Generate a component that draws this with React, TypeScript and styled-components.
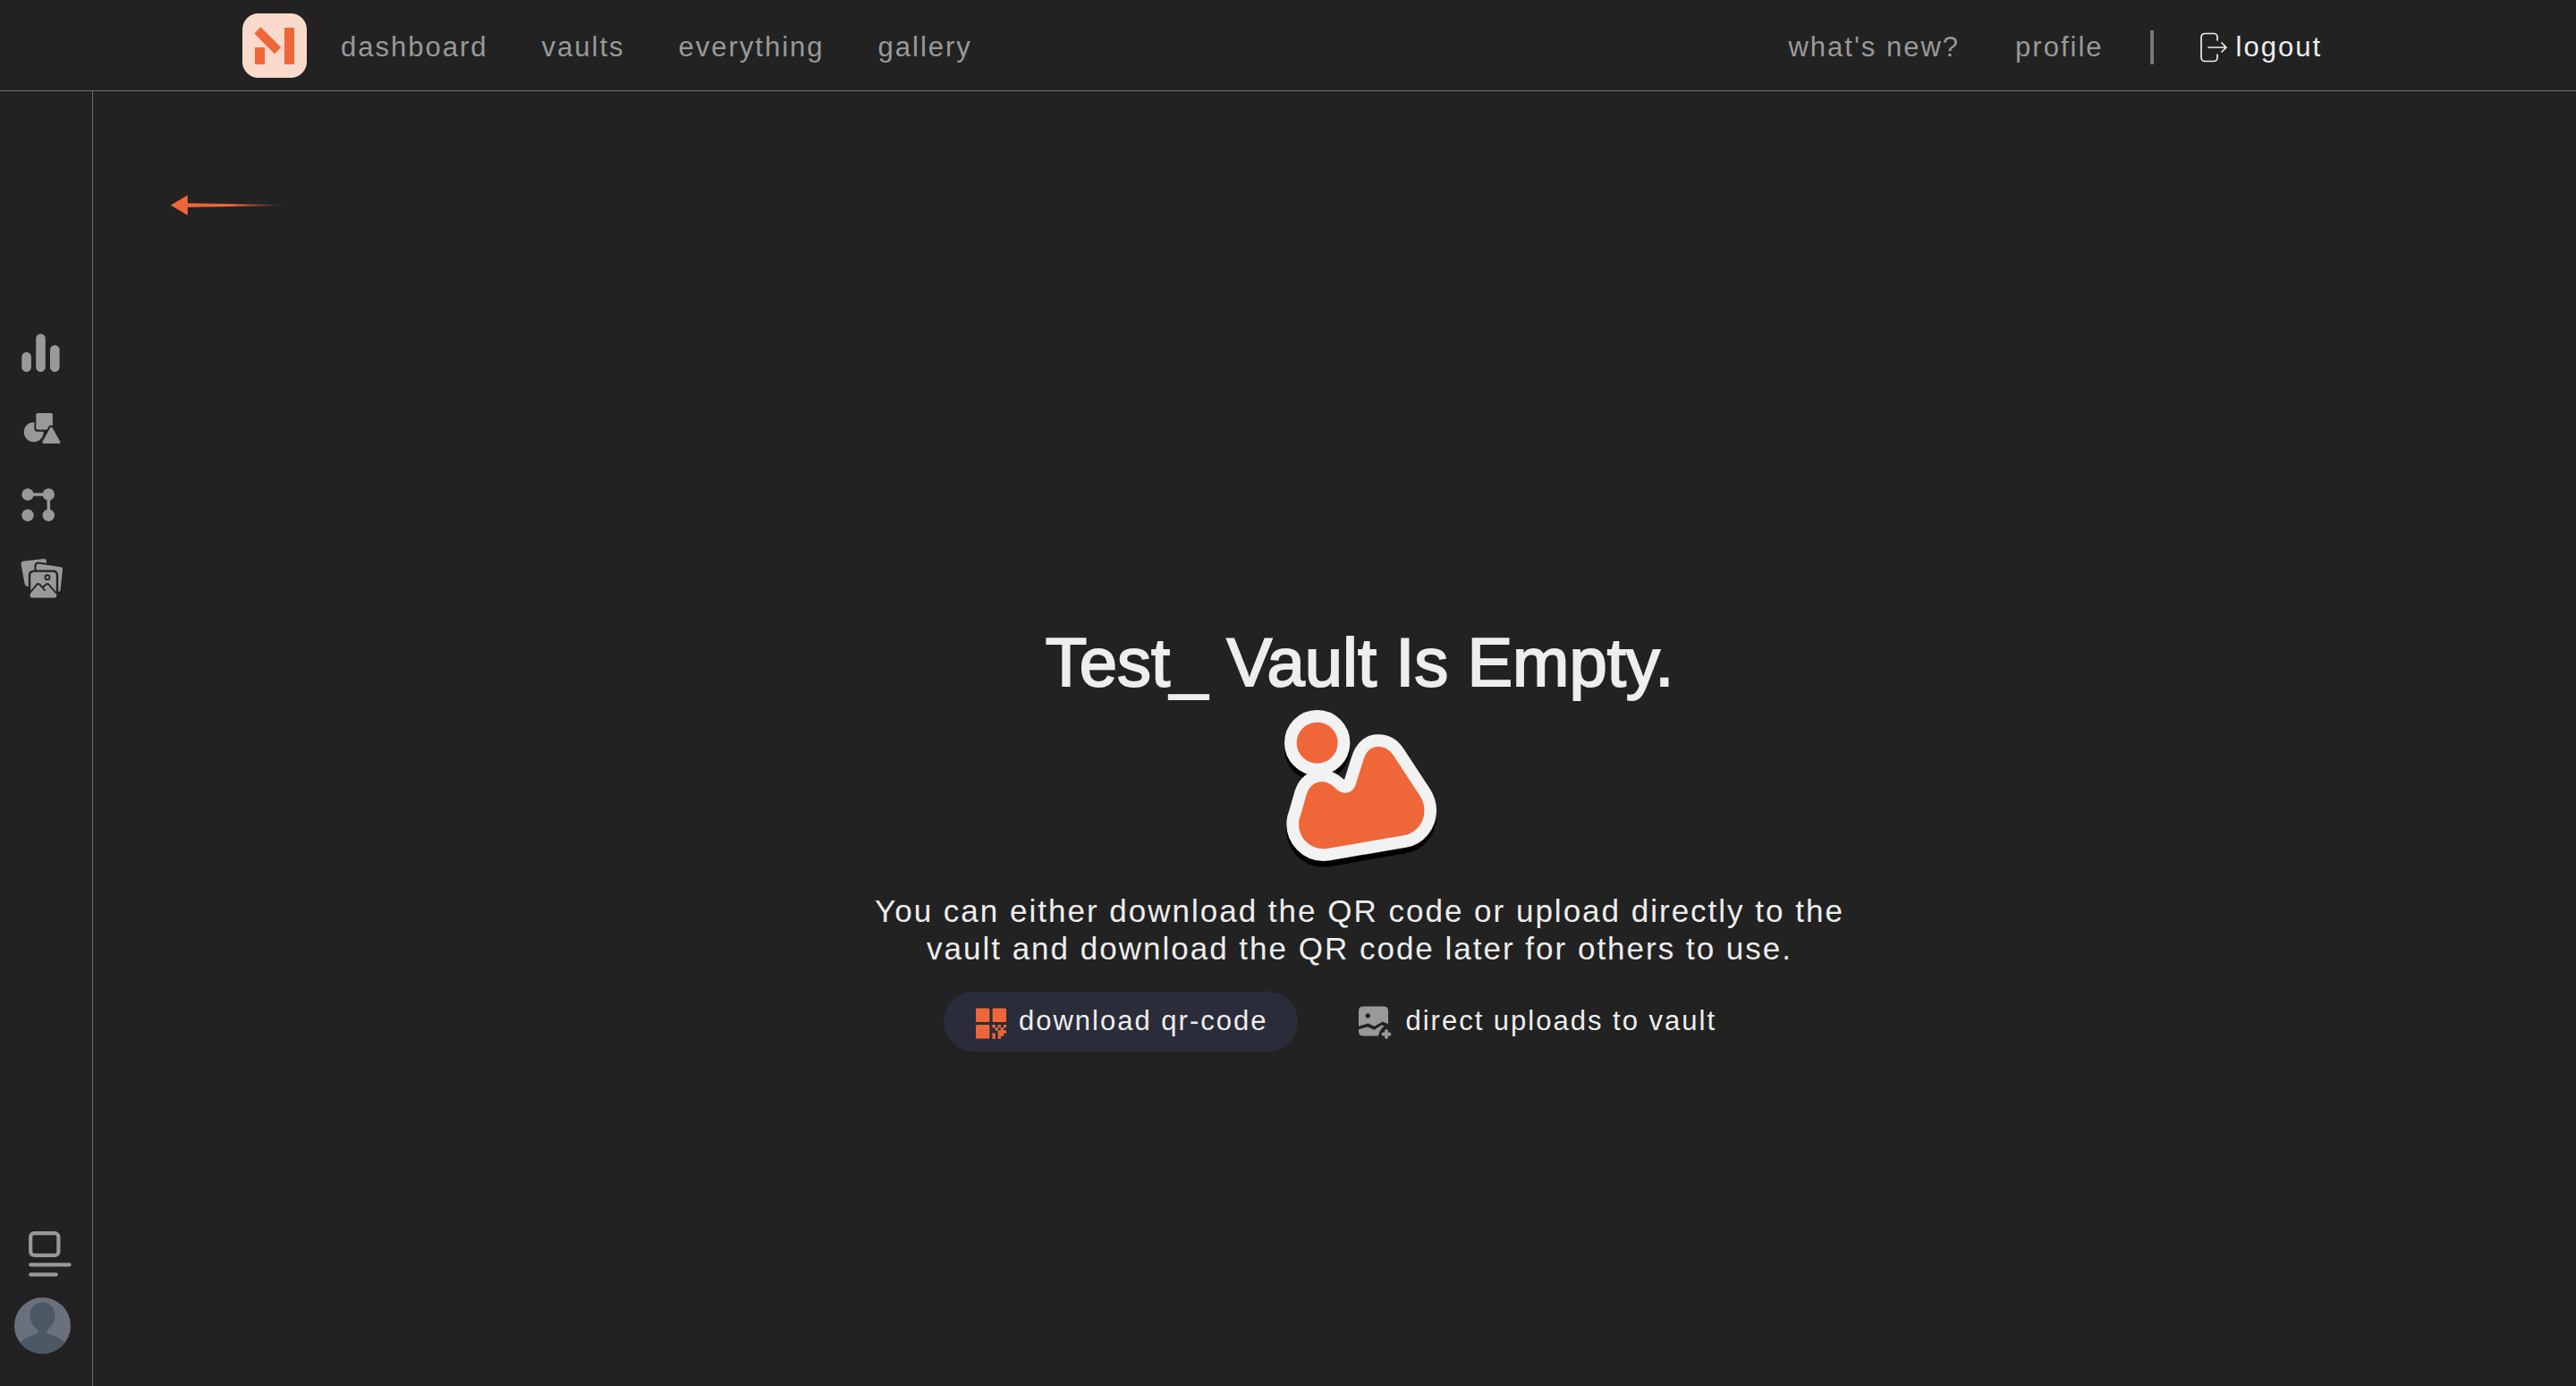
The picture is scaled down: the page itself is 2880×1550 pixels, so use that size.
import React from "react";
import styled, { createGlobalStyle } from "styled-components";

const colors = {
  bg: "#222222",
  line: "#6e6e6e",
  muted: "#999999",
  text: "#eeeeee",
  accent: "#ef6639",
  pill: "#2b2c39",
};

const GlobalStyle = createGlobalStyle`
  * { box-sizing: border-box; }
  body {
    margin: 0;
    background: ${colors.bg};
    color: ${colors.text};
    font-family: "Liberation Sans", Arial, Helvetica, sans-serif;
  }
`;

const Page = styled.div`
  min-height: 100vh;
  display: flex;
  flex-direction: column;
`;

const Header = styled.header`
  display: flex;
  align-items: center;
  justify-content: space-between;
  height: 102px;
  padding: 0 284px 0 271px;
  border-bottom: 1px solid ${colors.line};
`;

const HeaderStart = styled.div`
  display: flex;
  align-items: center;
  gap: 38px;
`;

const NavGroup = styled.nav<{ $gap: number }>`
  display: flex;
  align-items: center;
  gap: ${(p) => p.$gap}px;
  padding-top: 4px;
`;

const Brand = styled.a`
  display: flex;
`;

const NavLink = styled.a`
  color: ${colors.muted};
  font-size: 31px;
  line-height: 36px;
  letter-spacing: 2px;
  text-decoration: none;
`;

const Divider = styled.span`
  width: 4px;
  height: 38px;
  margin: 0 -10px;
  background: #777777;
`;

const PlainButton = styled.button`
  display: flex;
  align-items: center;
  gap: 10px;
  padding: 0;
  border: 0;
  background: none;
  color: ${colors.text};
  font-family: inherit;
  font-size: 31px;
  line-height: 36px;
  letter-spacing: 2px;
  cursor: pointer;
`;

const Body = styled.div`
  flex: 1;
  display: flex;
`;

const Sidebar = styled.aside`
  display: flex;
  flex-direction: column;
  justify-content: space-between;
  width: 104px;
  padding: 269px 0 36px;
  border-right: 1px solid ${colors.line};
`;

const SideNav = styled.nav`
  display: flex;
  flex-direction: column;
  gap: 36px;
  padding-left: 23px;
`;

const SideLink = styled.a`
  display: flex;
  color: ${colors.muted};
`;

const SideFooter = styled.div`
  display: flex;
  flex-direction: column;
  gap: 22px;
  padding-left: 16px;
`;

const PanelToggle = styled(PlainButton)`
  padding-left: 16px;
  color: ${colors.muted};
`;

const Main = styled.main`
  flex: 1;
  display: flex;
  flex-direction: column;
  padding: 112px 0 0 56px;
`;

const BackLink = styled.a`
  display: flex;
  align-self: flex-start;
  padding-left: 30px;
`;

const Empty = styled.section`
  flex: 1;
  display: flex;
  flex-direction: column;
  align-items: center;
  justify-content: center;
  padding-top: 78px;
`;

const Title = styled.h1`
  margin: 0 0 6px;
  font-size: 76px;
  line-height: 88px;
  font-weight: 400;
  -webkit-text-stroke: 2px ${colors.text};
`;

const Message = styled.p`
  max-width: 1120px;
  margin: 27px 0;
  font-size: 35px;
  line-height: 42px;
  letter-spacing: 2px;
  text-align: center;
`;

const Actions = styled.div`
  display: flex;
`;

const ActionButton = styled(PlainButton)<{ $filled?: boolean }>`
  gap: 14px;
  height: 67px;
  margin-right: 32px;
  padding: 0 34px 0 36px;
  border-radius: 34px;
  background: ${(p) => (p.$filled ? colors.pill : "transparent")};
`;

const Logo = () => (
  <svg width="72" height="72" viewBox="0 0 72 72">
    <rect width="72" height="72" rx="18" fill="#f9dacb" />
    <g fill={colors.accent}>
      <path d="M20.4 15.2 43.2 38 36 45.3 13.4 22.6Z" />
      <path d="M14 38H25V57H14ZM47 16H58V57H47Z" />
    </g>
  </svg>
);

const LogoutIcon = () => (
  <svg width="30" height="34" viewBox="0 0 30 34" fill="none" stroke="currentColor" strokeWidth="1.7" strokeLinecap="round" strokeLinejoin="round">
    <path d="M19 9V5.500a4 4 0 0 0-4-4H5a4 4 0 0 0-4 4V28.500a4 4 0 0 0 4 4H15a4 4 0 0 0 4-4V25" />
    <path d="M9 17H29M24 12l5 5-5 5" />
  </svg>
);

const BarsIcon = () => (
  <svg width="48" height="48" viewBox="0 0 48 48" fill="currentColor">
    <rect x="1.300" y="22.700" width="10.600" height="22.200" rx="5.300" />
    <rect x="17.200" y="2.200" width="10.600" height="42.700" rx="5.300" />
    <rect x="33" y="15" width="10.600" height="29.900" rx="5.300" />
  </svg>
);

const ShapesIcon = () => (
  <svg width="48" height="48" viewBox="0 0 48 48" fill="currentColor">
    <circle cx="14.700" cy="28.300" r="11" />
    <rect x="15.400" y="5.300" width="22.400" height="22.400" rx="3.500" fill={colors.bg} />
    <rect x="17.300" y="7" width="18.600" height="18.600" rx="1.800" />
    <path d="M34.300 24.500 42.800 39.500H26Z" stroke={colors.bg} strokeWidth="7.400" strokeLinejoin="round" />
    <path d="M34.300 24.500 42.800 39.500H26Z" stroke="currentColor" strokeWidth="3.200" strokeLinejoin="round" />
  </svg>
);

const NodesIcon = () => (
  <svg width="48" height="48" viewBox="0 0 48 48" fill="currentColor">
    <path d="M8 14H31.300V37.300" fill="none" stroke="currentColor" strokeWidth="3.500" />
    <circle cx="8" cy="14" r="6.700" />
    <circle cx="31.300" cy="14" r="6.700" />
    <circle cx="8" cy="37.300" r="6.700" />
    <circle cx="31.300" cy="37.300" r="6.700" />
  </svg>
);

const GalleryIcon = () => (
  <svg width="48" height="48" viewBox="0 0 48 48" fill="currentColor">
    <path d="M3.200 4.400 26 2Q28.700 2 29 4.600V12L14 32 9 33Q5.400 33 4.600 30L.6 8.500Q.2 5 3.200 4.400Z" />
    <path d="M20.500 6.500 46 10.200Q48.300 11 48 13.500L45.600 37Q45.200 39.400 43 40L28 32 16.500 18V9.500Q17 6 20.500 6.500Z" stroke={colors.bg} strokeWidth="2" />
    <path d="M15 15.600H36Q41 15.600 41 20V39L41.500 43Q41.500 46.800 38 46.800H13Q9.500 46.800 9.500 43L10 39V20.500Q10 15.600 15 15.600Z" stroke={colors.bg} strokeWidth="2.400" />
    <circle cx="30" cy="22.700" r="2.500" stroke={colors.bg} strokeWidth="1.800" />
    <path d="M10 40.500 18 30.800Q19.700 29.200 21.500 30.800L27.500 37.300M24.500 34.300 28.500 30.500Q30 29.300 31.600 30.800L40 40.500" fill="none" stroke={colors.bg} strokeWidth="1.900" />
  </svg>
);

const PanelIcon = () => (
  <svg width="48" height="52" viewBox="0 0 48 52" fill="none" stroke="currentColor" strokeWidth="4.200" strokeLinecap="round">
    <rect x="2.200" y="2.200" width="31.200" height="24.600" rx="4" />
    <path d="M2.200 37.300H45.600M2.200 48.300H30.700" />
  </svg>
);

const Avatar = () => (
  <svg width="63" height="63" viewBox="0 0 63 63">
    <defs>
      <clipPath id="avatar-clip">
        <circle cx="31.500" cy="31.500" r="31.500" />
      </clipPath>
    </defs>
    <g clipPath="url(#avatar-clip)">
      <rect width="63" height="63" fill="#6a717c" />
      <path
        fill="#4c5864"
        d="M31.500 5.500C23 5.500 17.500 11.500 17.500 19.500 17.500 28 22 33 25.500 36 27.500 38.500 26.500 40 24 41 15 44 10 46 5 52V63H58V52C53 46 48 44 39 41 36.500 40 35.500 38.500 37.500 36 41 33 45.500 28 45.500 19.500 45.500 11.500 40 5.500 31.500 5.500Z"
      />
    </g>
  </svg>
);

const BackArrow = () => (
  <svg width="128" height="30" viewBox="0 0 128 30">
    <defs>
      <linearGradient id="tail" x1="0" x2="1">
        <stop offset="0.450" stopColor={colors.accent} />
        <stop offset="1" stopColor={colors.accent} stopOpacity="0" />
      </linearGradient>
    </defs>
    <path d="M.7 15.500 19.800 4.300V26.700Z" fill={colors.accent} />
    <path d="M19 13.200 128 15V16L19 17.800Z" fill="url(#tail)" />
  </svg>
);

const mountain =
  "M183 350C192 322 215 309 235 310C258 311 272 325 283 335C302 353 336 352 346 322L372 240C382 205 400 192 423 192C445 192 462 204 474 222L562 356C574 375 578 390 577 410C576 448 548 482 512 489L250 534C195 540 150 496 157 440C158 432 160 428 162 422Z";

const Sticker = () => (
  <svg width="180" height="180" viewBox="90 60 540 540">
    <g transform="translate(0 20)" fill="#000" stroke="#000" strokeWidth="82" strokeLinejoin="round">
      <circle cx="218" cy="179" r="69" />
      <path d={mountain} />
    </g>
    <g fill="#f2f2f2" stroke="#f2f2f2" strokeWidth="82" strokeLinejoin="round">
      <circle cx="218" cy="179" r="69" />
      <path d={mountain} />
    </g>
    <g fill={colors.accent}>
      <circle cx="218" cy="179" r="69" />
      <path d={mountain} />
    </g>
  </svg>
);

const qrCells = ["10101", "01010", "00111", "10110", "10100"];

const QrIcon = () => (
  <svg width="34" height="40" viewBox="0 0 34 40" fill={colors.accent}>
    <rect x="0" y="5.500" width="15.400" height="15.400" rx="1.500" />
    <rect x="18.600" y="5.500" width="15.400" height="15.400" rx="1.500" />
    <rect x="0" y="24" width="15.400" height="15.400" rx="1.500" />
    {qrCells.flatMap((row, y) =>
      [...row].map((cell, x) =>
        cell === "1" ? (
          <rect key={`${x}-${y}`} x={18.4 + x * 3.1} y={24 + y * 3.1} width="3.400" height="3.400" />
        ) : null
      )
    )}
  </svg>
);

const ImagePlusIcon = () => (
  <svg width="38" height="40" viewBox="0 0 38 40" fill={colors.muted}>
    <g transform="translate(0 3.500)">
      <path d="M5 0H28Q33 0 33 5V19.800L27 17 17.500 22.300 10.500 19 0 22.300V5Q0 0 5 0Z" />
      <path d="M0 25.700 10 23 17.500 26.300 26 20.700 28.500 22Q23 26.500 22 33H5Q0 33 0 28Z" />
      <circle cx="10.300" cy="10.300" r="2.600" fill={colors.bg} />
      <path d="M31 27.500V34.500M27.500 31H34.500" stroke={colors.muted} strokeWidth="3.800" strokeLinecap="round" />
    </g>
  </svg>
);

export default function App() {
  return (
    <Page>
      <GlobalStyle />
      <Header>
        <HeaderStart>
          <Brand href="#" aria-label="Home">
            <Logo />
          </Brand>
          <NavGroup $gap={60} aria-label="Main">
            <NavLink href="#">dashboard</NavLink>
            <NavLink href="#">vaults</NavLink>
            <NavLink href="#">everything</NavLink>
            <NavLink href="#">gallery</NavLink>
          </NavGroup>
        </HeaderStart>
        <NavGroup $gap={62} aria-label="Account">
          <NavLink href="#">what's new?</NavLink>
          <NavLink href="#">profile</NavLink>
          <Divider />
          <PlainButton type="button">
            <LogoutIcon />
            logout
          </PlainButton>
        </NavGroup>
      </Header>
      <Body>
        <Sidebar>
          <SideNav aria-label="Vault">
            <SideLink href="#" aria-label="Statistics"><BarsIcon /></SideLink>
            <SideLink href="#" aria-label="Categories"><ShapesIcon /></SideLink>
            <SideLink href="#" aria-label="Connections"><NodesIcon /></SideLink>
            <SideLink href="#" aria-label="Gallery"><GalleryIcon /></SideLink>
          </SideNav>
          <SideFooter>
            <PanelToggle type="button" aria-label="Toggle panel"><PanelIcon /></PanelToggle>
            <SideLink href="#" aria-label="Profile"><Avatar /></SideLink>
          </SideFooter>
        </Sidebar>
        <Main>
          <BackLink href="#" aria-label="Back"><BackArrow /></BackLink>
          <Empty>
            <Title>Test_ Vault Is Empty.</Title>
            <Sticker />
            <Message>
              You can either download the QR code or upload directly to the vault and download the QR code later for others to use.
            </Message>
            <Actions>
              <ActionButton type="button" $filled>
                <QrIcon />
                download qr-code
              </ActionButton>
              <ActionButton type="button">
                <ImagePlusIcon />
                direct uploads to vault
              </ActionButton>
            </Actions>
          </Empty>
        </Main>
      </Body>
    </Page>
  );
}
